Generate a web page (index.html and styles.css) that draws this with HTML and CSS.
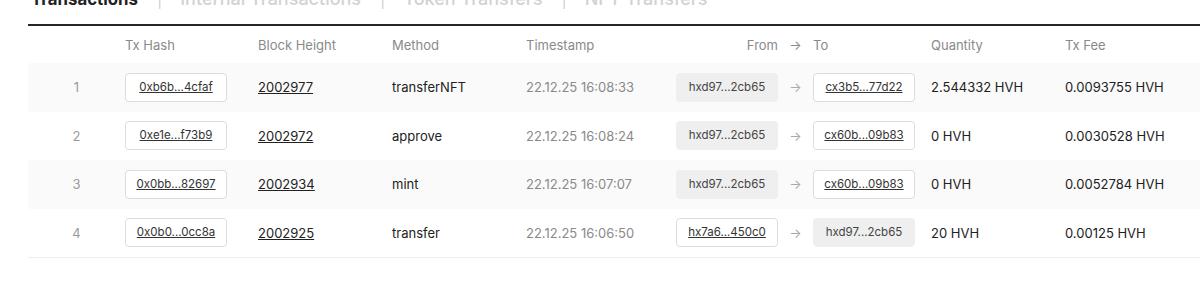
FILE: index.html
```html
<!DOCTYPE html>
<html lang="en">
<head>
  <meta charset="UTF-8">
  <meta name="viewport" content="width=device-width, initial-scale=1.0">
  <title>Transactions</title>
  <link rel="stylesheet" href="styles.css">
</head>
<body>
  <div class="page-wrapper">
    <div class="tabs">
      <span class="tab active">Transactions</span>
      <span class="tab-sep">|</span>
      <span class="tab">Internal Transactions</span>
      <span class="tab-sep">|</span>
      <span class="tab">Token Transfers</span>
      <span class="tab-sep">|</span>
      <span class="tab">NFT Transfers</span>
    </div>
    <table class="tx-table">
      <thead>
        <tr>
          <th class="col-no"></th>
          <th class="col-hash">Tx Hash</th>
          <th class="col-block">Block Height</th>
          <th class="col-method">Method</th>
          <th class="col-time">Timestamp</th>
          <th class="col-from text-right">From</th>
          <th class="col-arrow">&rarr;</th>
          <th class="col-to">To</th>
          <th class="col-qty">Quantity</th>
          <th class="col-fee">Tx Fee</th>
        </tr>
      </thead>
      <tbody>
        <tr>
          <td class="col-no">1</td>
          <td><a class="addr-box link">0xb6b...4cfaf</a></td>
          <td><a class="block-link">2002977</a></td>
          <td>transferNFT</td>
          <td class="muted">22.12.25 16:08:33</td>
          <td class="text-right"><span class="addr-box plain">hxd97...2cb65</span></td>
          <td class="col-arrow">&rarr;</td>
          <td><a class="addr-box link">cx3b5...77d22</a></td>
          <td>2.544332 HVH</td>
          <td>0.0093755 HVH</td>
        </tr>
        <tr>
          <td class="col-no">2</td>
          <td><a class="addr-box link">0xe1e...f73b9</a></td>
          <td><a class="block-link">2002972</a></td>
          <td>approve</td>
          <td class="muted">22.12.25 16:08:24</td>
          <td class="text-right"><span class="addr-box plain">hxd97...2cb65</span></td>
          <td class="col-arrow">&rarr;</td>
          <td><a class="addr-box link">cx60b...09b83</a></td>
          <td>0 HVH</td>
          <td>0.0030528 HVH</td>
        </tr>
        <tr>
          <td class="col-no">3</td>
          <td><a class="addr-box link">0x0bb...82697</a></td>
          <td><a class="block-link">2002934</a></td>
          <td>mint</td>
          <td class="muted">22.12.25 16:07:07</td>
          <td class="text-right"><span class="addr-box plain">hxd97...2cb65</span></td>
          <td class="col-arrow">&rarr;</td>
          <td><a class="addr-box link">cx60b...09b83</a></td>
          <td>0 HVH</td>
          <td>0.0052784 HVH</td>
        </tr>
        <tr>
          <td class="col-no">4</td>
          <td><a class="addr-box link">0x0b0...0cc8a</a></td>
          <td><a class="block-link">2002925</a></td>
          <td>transfer</td>
          <td class="muted">22.12.25 16:06:50</td>
          <td class="text-right"><a class="addr-box link">hx7a6...450c0</a></td>
          <td class="col-arrow">&rarr;</td>
          <td><span class="addr-box plain">hxd97...2cb65</span></td>
          <td>20 HVH</td>
          <td>0.00125 HVH</td>
        </tr>
      </tbody>
    </table>
  </div>
</body>
</html>
```

FILE: styles.css
```css
*{
  margin: 0;
  padding: 0;
  box-sizing: border-box;
}

body{
  font-family: Inter, "Noto Sans", sans-serif;
  font-size: 13px;
  color: #222;
  background-color: #fff;
  overflow: hidden;
}

.page-wrapper{
  padding-left: 28px;
}

.tabs{
  display: flex;
  align-items: baseline;
  height: 35px;
  margin-top: -11px;
  padding-left: 3px;
  font-size: 18px;
  line-height: 20px;
  font-weight: 500;
}

.tab{
  color: #d2d2d2;
}

.tab.active{
  color: #222;
  font-weight: 700;
  font-size: 16.8px;
}

.tab-sep{
  color: #c8c8c8;
  font-size: 17px;
  font-weight: 300;
  margin: 0 18px 0 19px;
}

.tx-table{
  width: 1172px;
  border-collapse: collapse;
  border-top: 2px solid #262626;
  table-layout: fixed;
}

.tx-table th{
  height: 38px;
  font-weight: 400;
  color: #8a8a8a;
  text-align: left;
  white-space: nowrap;
}

.tx-table td{
  height: 48.5px;
  white-space: nowrap;
}

.tx-table tbody tr:nth-child(odd){
  background-color: #fafafa;
}

.tx-table tbody tr:last-child{
  border-bottom: 1px solid #eee;
}

.col-no{
  width: 97px;
  text-align: center !important;
  color: #9a9a9a;
}

.col-hash{ width: 133px; }
.col-block{ width: 134px; }
.col-method{ width: 134px; }
.col-time{ width: 133px; }
.col-from{ width: 119px; }
.col-to{ width: 118px; }
.col-qty{ width: 134px; }
.col-fee{ width: 135px; }

.col-arrow{
  width: 35px;
  text-align: center !important;
  color: #aaa;
}

.text-right{
  text-align: right !important;
}

.muted{
  color: #8a8a8a;
}

.block-link{
  color: #222;
  text-decoration: underline;
}

.addr-box{
  display: inline-block;
  width: 102px;
  height: 29px;
  line-height: 27px;
  border-radius: 4px;
  font-size: 11.5px;
  text-align: center;
  vertical-align: middle;
}

.addr-box.link{
  background-color: #fff;
  border: 1px solid #ddd;
  color: #333;
  text-decoration: underline;
}

.addr-box.plain{
  background-color: #efefef;
  border: 1px solid #efefef;
  color: #444;
}
```
